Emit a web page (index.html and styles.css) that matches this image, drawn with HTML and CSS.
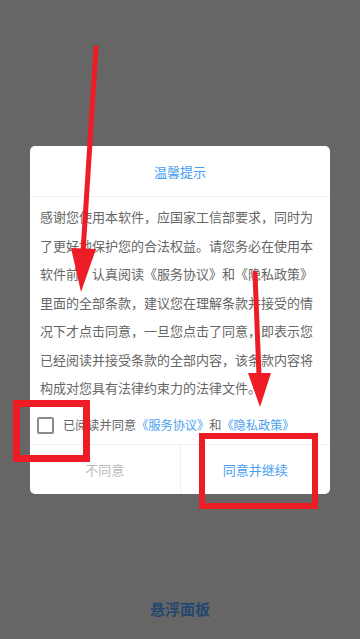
FILE: index.html
```html
<!DOCTYPE html>
<html lang="zh-CN">
<head>
    <meta charset="UTF-8">
    <title>悬浮面板</title>
    <link rel="stylesheet" href="styles.css">
</head>
<body>
    <div class="page">
        <div class="dialog">
            <div class="dialog-title">温馨提示</div>
            <div class="dialog-body">
                <p class="content">感谢您使用本软件，应国家工信部要求，同时为了更好地保护您的合法权益。请您务必在使用本软件前，认真阅读《服务协议》和《隐私政策》里面的全部条款，建议您在理解条款并接受的情况下才点击同意，一旦您点击了同意，即表示您已经阅读并接受条款的全部内容，该条款内容将构成对您具有法律约束力的法律文件。</p>
                <label class="agree">
                    <span class="check"></span>
                    <span>已阅读并同意<a class="link">《服务协议》</a>和<a class="link">《隐私政策》</a></span>
                </label>
            </div>
            <div class="dialog-btns">
                <div class="btn btn-no">不同意</div>
                <div class="btn btn-yes">同意并继续</div>
            </div>
        </div>
        <div class="footer">悬浮面板</div>
    </div>
    <!-- 标注 -->
    <svg class="marks" width="360" height="639" viewBox="0 0 360 639">
        <line x1="96" y1="48" x2="83" y2="252" stroke="#ee1c25" stroke-width="5" stroke-linecap="round"/>
        <polygon points="71,248 96,249 81,292" fill="#ee1c25"/>
        <line x1="255" y1="273" x2="259" y2="376" stroke="#ee1c25" stroke-width="5" stroke-linecap="round"/>
        <polygon points="248,373 271,373 260,407" fill="#ee1c25"/>
        <rect x="16.5" y="403.5" width="70" height="55" fill="none" stroke="#ee1c25" stroke-width="7"/>
        <rect x="202" y="436" width="113" height="70" fill="none" stroke="#ee1c25" stroke-width="6"/>
    </svg>
</body>
</html>
```

FILE: styles.css
```css
*{
    padding:0;margin:0;
    box-sizing:border-box;
}
body{
    background-color:#666666;
    font-family:"Noto Sans CJK SC","Noto Sans",sans-serif;
}
.page{
    display:flex;
    flex-direction:column;
    align-items:center;
    height:639px;
}
.dialog{
    width:300px;
    margin-top:146px;
    background-color:#ffffff;
    border-radius:5px;
    overflow:hidden;
}
.dialog-title{
    height:51px;
    line-height:51px;
    text-align:center;
    font-size:13px;
    color:#3f9ef2;
    border-bottom:1px solid #f0f0f0;
}
.dialog-body{
    padding:6px 10px 0 10px;
}
.content{
    font-size:13px;
    line-height:28.5px;
    color:#666666;
}
.agree{
    display:flex;
    align-items:center;
    height:41px;
    padding-top:4px;
    font-size:12.2px;
    color:#666666;
}
.check{
    width:17px;
    height:17px;
    margin:0 9px 0 -3px;
    border:2px solid #8a8a8a;
    border-radius:2px;
}
.link{
    color:#4a9ff0;
}
.dialog-btns{
    display:flex;
    height:50px;
    border-top:1px solid #f0f0f0;
}
.btn{
    flex:1;
    display:flex;
    align-items:center;
    justify-content:center;
    font-size:13px;
}
.btn-no{
    color:#bbbbbb;
    border-right:1px solid #f0f0f0;
}
.btn-yes{
    color:#4a9ff0;
}
.footer{
    margin-top:auto;
    margin-bottom:20px;
    font-size:15px;
    font-weight:bold;
    color:#24476f;
}
.marks{
    position:absolute;
    left:0;top:0;
    pointer-events:none;
}
```
